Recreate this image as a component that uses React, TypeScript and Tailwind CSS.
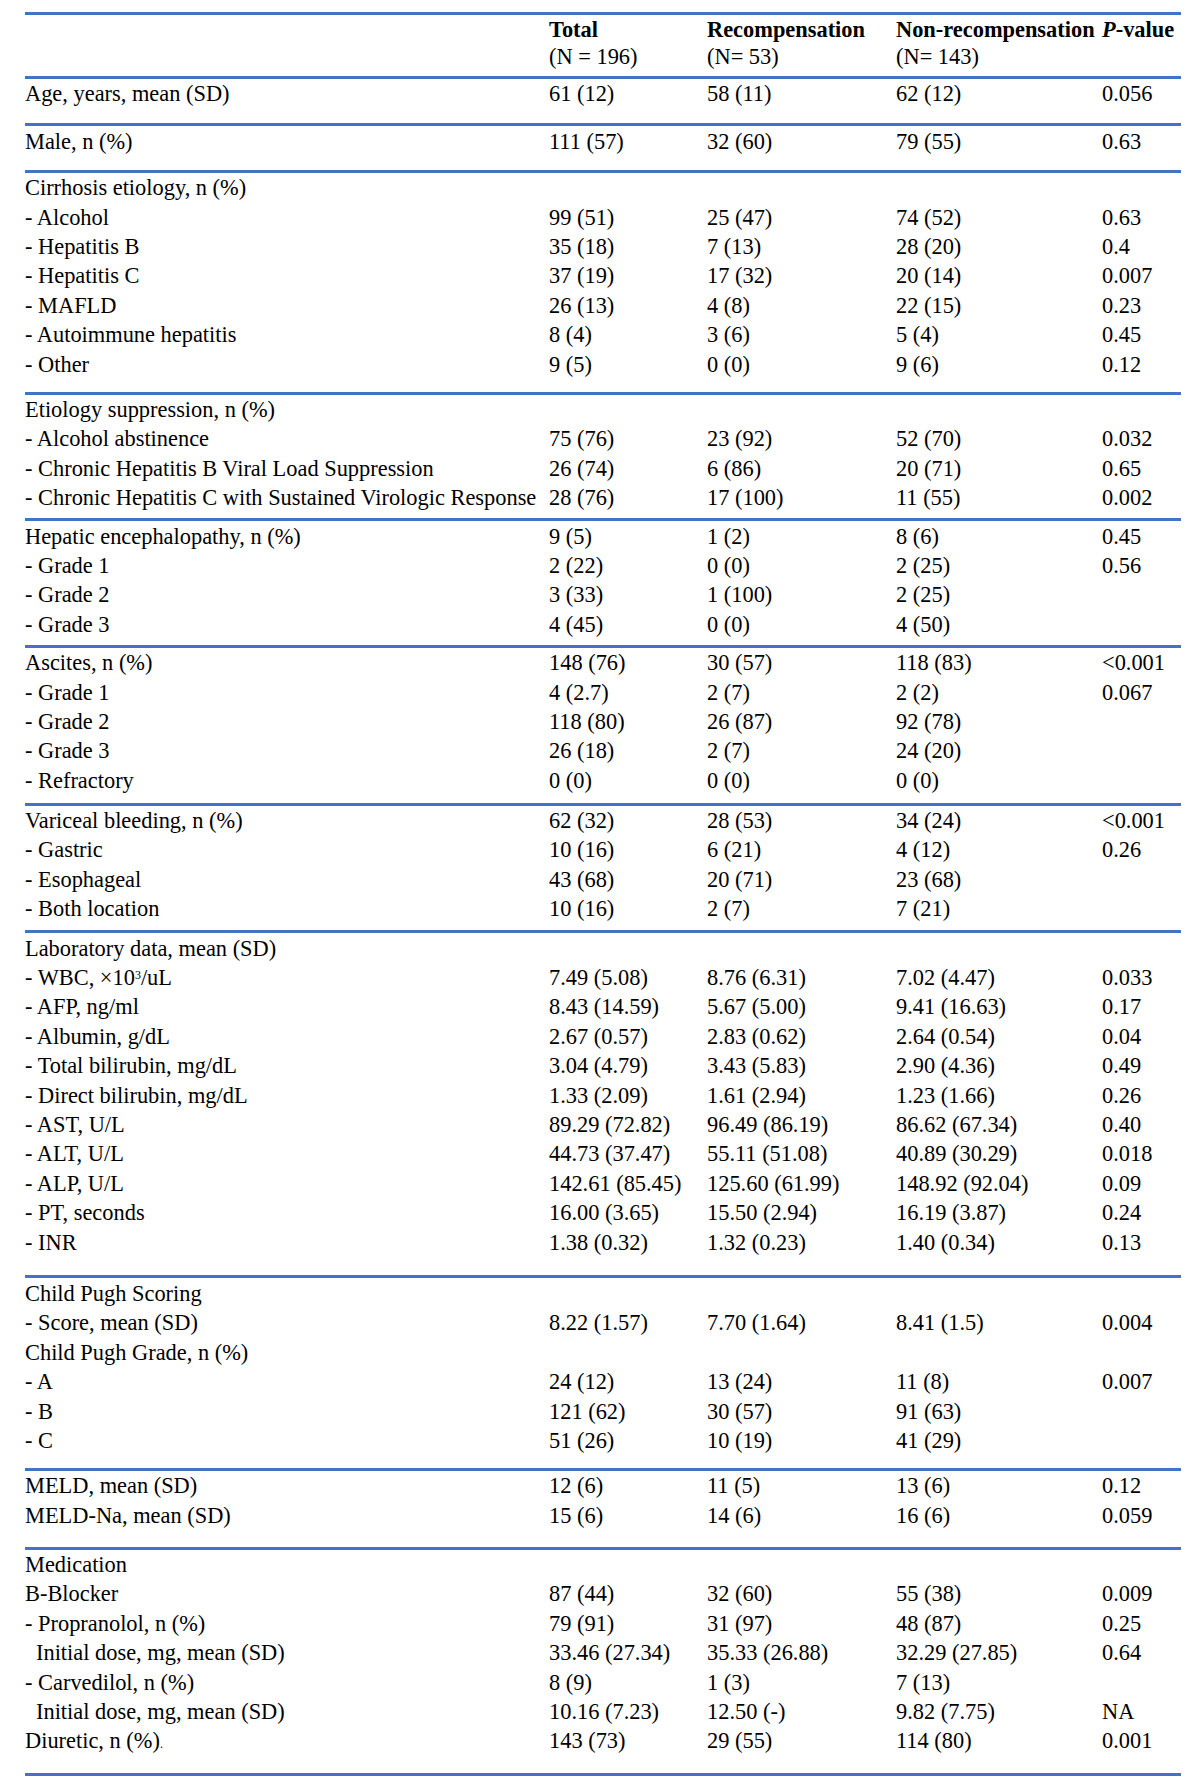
import React from "react";

type Row = {
  label: React.ReactNode;
  indent?: boolean;
  total?: string;
  re?: string;
  non?: string;
  p?: string;
};

type Group = { rows: Row[]; pb: string };

const groups: Group[] = [
  { rows: [{ label: "Age, years, mean (SD)", total: "61 (12)", re: "58 (11)", non: "62 (12)", p: "0.056" }], pb: "pb-[15px]" },
  { rows: [{ label: "Male, n (%)", total: "111 (57)", re: "32 (60)", non: "79 (55)", p: "0.63" }], pb: "pb-[14px]" },
  {
    rows: [
      { label: "Cirrhosis etiology, n (%)" },
      { label: "- Alcohol", total: "99 (51)", re: "25 (47)", non: "74 (52)", p: "0.63" },
      { label: "- Hepatitis B", total: "35 (18)", re: "7 (13)", non: "28 (20)", p: "0.4" },
      { label: "- Hepatitis C", total: "37 (19)", re: "17 (32)", non: "20 (14)", p: "0.007" },
      { label: "- MAFLD", total: "26 (13)", re: "4 (8)", non: "22 (15)", p: "0.23" },
      { label: "- Autoimmune hepatitis", total: "8 (4)", re: "3 (6)", non: "5 (4)", p: "0.45" },
      { label: "- Other", total: "9 (5)", re: "0 (0)", non: "9 (6)", p: "0.12" },
    ],
    pb: "pb-[13px]",
  },
  {
    rows: [
      { label: "Etiology suppression, n (%)" },
      { label: "- Alcohol abstinence", total: "75 (76)", re: "23 (92)", non: "52 (70)", p: "0.032" },
      { label: "- Chronic Hepatitis B Viral Load Suppression", total: "26 (74)", re: "6 (86)", non: "20 (71)", p: "0.65" },
      { label: "- Chronic Hepatitis C with Sustained Virologic Response", total: "28 (76)", re: "17 (100)", non: "11 (55)", p: "0.002" },
    ],
    pb: "pb-[6px]",
  },
  {
    rows: [
      { label: "Hepatic encephalopathy, n (%)", total: "9 (5)", re: "1 (2)", non: "8 (6)", p: "0.45" },
      { label: "- Grade 1", total: "2 (22)", re: "0 (0)", non: "2 (25)", p: "0.56" },
      { label: "- Grade 2", total: "3 (33)", re: "1 (100)", non: "2 (25)" },
      { label: "- Grade 3", total: "4 (45)", re: "0 (0)", non: "4 (50)" },
    ],
    pb: "pb-[6px]",
  },
  {
    rows: [
      { label: "Ascites, n (%)", total: "148 (76)", re: "30 (57)", non: "118 (83)", p: "<0.001" },
      { label: "- Grade 1", total: "4 (2.7)", re: "2 (7)", non: "2 (2)", p: "0.067" },
      { label: "- Grade 2", total: "118 (80)", re: "26 (87)", non: "92 (78)" },
      { label: "- Grade 3", total: "26 (18)", re: "2 (7)", non: "24 (20)" },
      { label: "- Refractory", total: "0 (0)", re: "0 (0)", non: "0 (0)" },
    ],
    pb: "pb-[8px]",
  },
  {
    rows: [
      { label: "Variceal bleeding, n (%)", total: "62 (32)", re: "28 (53)", non: "34 (24)", p: "<0.001" },
      { label: "- Gastric", total: "10 (16)", re: "6 (21)", non: "4 (12)", p: "0.26" },
      { label: "- Esophageal", total: "43 (68)", re: "20 (71)", non: "23 (68)" },
      { label: "- Both location", total: "10 (16)", re: "2 (7)", non: "7 (21)" },
    ],
    pb: "pb-[7px]",
  },
  {
    rows: [
      { label: "Laboratory data, mean (SD)" },
      {
        label: (
          <>
            - WBC, ×10<sup className="text-[12px]">3</sup>/uL
          </>
        ),
        total: "7.49 (5.08)",
        re: "8.76 (6.31)",
        non: "7.02 (4.47)",
        p: "0.033",
      },
      { label: "- AFP, ng/ml", total: "8.43 (14.59)", re: "5.67 (5.00)", non: "9.41 (16.63)", p: "0.17" },
      { label: "- Albumin, g/dL", total: "2.67 (0.57)", re: "2.83 (0.62)", non: "2.64 (0.54)", p: "0.04" },
      { label: "- Total bilirubin, mg/dL", total: "3.04 (4.79)", re: "3.43 (5.83)", non: "2.90 (4.36)", p: "0.49" },
      { label: "- Direct bilirubin, mg/dL", total: "1.33 (2.09)", re: "1.61 (2.94)", non: "1.23 (1.66)", p: "0.26" },
      { label: "- AST, U/L", total: "89.29 (72.82)", re: "96.49 (86.19)", non: "86.62 (67.34)", p: "0.40" },
      { label: "- ALT, U/L", total: "44.73 (37.47)", re: "55.11 (51.08)", non: "40.89 (30.29)", p: "0.018" },
      { label: "- ALP, U/L", total: "142.61 (85.45)", re: "125.60 (61.99)", non: "148.92 (92.04)", p: "0.09" },
      { label: "- PT, seconds", total: "16.00 (3.65)", re: "15.50 (2.94)", non: "16.19 (3.87)", p: "0.24" },
      { label: "- INR", total: "1.38 (0.32)", re: "1.32 (0.23)", non: "1.40 (0.34)", p: "0.13" },
    ],
    pb: "pb-[19px]",
  },
  {
    rows: [
      { label: "Child Pugh Scoring" },
      { label: "- Score, mean (SD)", total: "8.22 (1.57)", re: "7.70 (1.64)", non: "8.41 (1.5)", p: "0.004" },
      { label: "Child Pugh Grade, n (%)" },
      { label: "- A", total: "24 (12)", re: "13 (24)", non: "11 (8)", p: "0.007" },
      { label: "- B", total: "121 (62)", re: "30 (57)", non: "91 (63)" },
      { label: "- C", total: "51 (26)", re: "10 (19)", non: "41 (29)" },
    ],
    pb: "pb-[13px]",
  },
  {
    rows: [
      { label: "MELD, mean (SD)", total: "12 (6)", re: "11 (5)", non: "13 (6)", p: "0.12" },
      { label: "MELD-Na, mean (SD)", total: "15 (6)", re: "14 (6)", non: "16 (6)", p: "0.059" },
    ],
    pb: "pb-[17px]",
  },
  {
    rows: [
      { label: "Medication" },
      { label: "B-Blocker", total: "87 (44)", re: "32 (60)", non: "55 (38)", p: "0.009" },
      { label: "- Propranolol, n (%)", total: "79 (91)", re: "31 (97)", non: "48 (87)", p: "0.25" },
      { label: "Initial dose, mg, mean (SD)", indent: true, total: "33.46 (27.34)", re: "35.33 (26.88)", non: "32.29 (27.85)", p: "0.64" },
      { label: "- Carvedilol, n (%)", total: "8 (9)", re: "1 (3)", non: "7 (13)" },
      { label: "Initial dose, mg, mean (SD)", indent: true, total: "10.16 (7.23)", re: "12.50 (-)", non: "9.82 (7.75)", p: "NA" },
      {
        label: (
          <>
            Diuretic, n (%)<span className="text-[12px]">.</span>
          </>
        ),
        total: "143 (73)",
        re: "29 (55)",
        non: "114 (80)",
        p: "0.001",
      },
    ],
    pb: "pb-[18px]",
  },
];

const cols = "grid grid-cols-[524px_158px_189px_206px_79px]";

function DataRow({ row }: { row: Row }) {
  return (
    <div className={`${cols} h-[29.4px] items-center whitespace-nowrap pt-[2px]`}>
      <div className={row.indent ? "pl-[11px]" : ""}>{row.label}</div>
      <div>{row.total}</div>
      <div>{row.re}</div>
      <div>{row.non}</div>
      <div>{row.p}</div>
    </div>
  );
}

export default function App() {
  return (
    <div className="min-h-[1792px] w-[1200px] bg-white pt-[12px] pl-[25px] font-['Liberation_Serif',serif] text-[22.4px] leading-none text-black">
      <div className="w-[1156px]">
        <div className={`${cols} border-t-[3px] border-[#4472c4] pb-[6px] font-bold`}>
          <div />
          <div className="flex flex-col">
            <span className="flex h-[27.5px] items-center pt-[2px]">Total</span>
            <span className="flex h-[27.5px] items-center pt-[2px] font-normal">(N = 196)</span>
          </div>
          <div className="flex flex-col">
            <span className="flex h-[27.5px] items-center pt-[2px]">Recompensation</span>
            <span className="flex h-[27.5px] items-center pt-[2px] font-normal">(N= 53)</span>
          </div>
          <div className="flex flex-col">
            <span className="flex h-[27.5px] items-center whitespace-nowrap pt-[2px]">Non-recompensation</span>
            <span className="flex h-[27.5px] items-center pt-[2px] font-normal">(N= 143)</span>
          </div>
          <div className="flex flex-col">
            <span className="flex h-[27.5px] items-center whitespace-nowrap pt-[2px]">
              <i>P</i>-value
            </span>
          </div>
        </div>
        {groups.map((g, i) => (
          <div key={i} className={`border-t-[3px] border-[#4472c4] ${g.pb}`}>
            {g.rows.map((r, j) => (
              <DataRow key={j} row={r} />
            ))}
          </div>
        ))}
        <div className="border-t-[3px] border-[#4472c4]" />
      </div>
    </div>
  );
}
